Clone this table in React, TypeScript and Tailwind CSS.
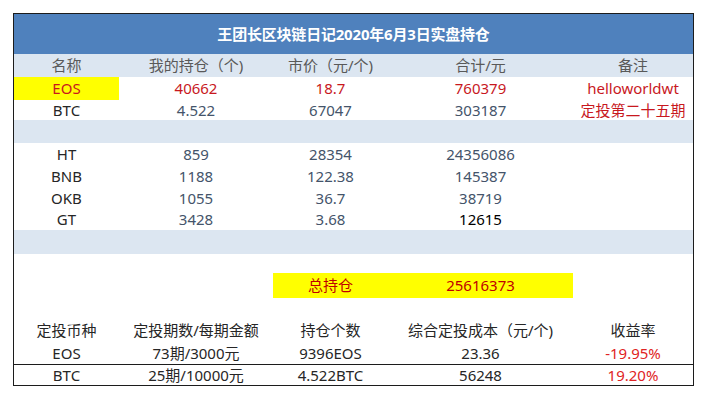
import React from 'react'

const cols = 'grid grid-cols-[105px_154px_115px_185px_120px]'

const navy = 'text-[#44546a]'
const red = 'text-[#c8181e]'
const dark = 'text-[#262626]'
const grey = 'text-[#595959]'

type Cell = { text: string; cls?: string }

function Row({ cells, h, bg = '' }: { cells: Cell[]; h: string; bg?: string }) {
  return (
    <div className={`${cols} ${h} ${bg}`}>
      {cells.map((c, i) => (
        <div key={i} className={`flex items-center justify-center ${c.cls ?? ''}`}>
          {c.text}
        </div>
      ))}
    </div>
  )
}

const holdings = [
  ['HT', '859', '28354', '24356086'],
  ['BNB', '1188', '122.38', '145387'],
  ['OKB', '1055', '36.7', '38719'],
  ['GT', '3428', '3.68', '12615'],
]

export default function App() {
  return (
    <div
      className="w-[712px] h-[400px] bg-white pt-[13px] pl-[13px] text-[15px] leading-none"
      style={{ fontFamily: '"Noto Sans", "Noto Sans CJK SC", sans-serif' }}
    >
      <div className="w-[681px] border border-[#1c1c1c]">
        {/* Title */}
        <div className="h-[40px] bg-[#4f81bd] flex items-center justify-center text-white font-bold text-[15px] tracking-[-0.2px]">
          王团长区块链日记2020年6月3日实盘持仓
        </div>

        {/* Column headers */}
        <Row
          h="h-[23px]"
          bg="bg-[#dce6f1]"
          cells={[
            { text: '名称', cls: grey },
            { text: '我的持仓（个)', cls: grey },
            { text: '市价（元/个)', cls: grey },
            { text: '合计/元', cls: grey },
            { text: '备注', cls: grey },
          ]}
        />

        {/* Main holdings */}
        <Row
          h="h-[23px]"
          cells={[
            { text: 'EOS', cls: `${red} bg-[#ffff00]` },
            { text: '40662', cls: red },
            { text: '18.7', cls: red },
            { text: '760379', cls: red },
            { text: 'helloworldwt', cls: red },
          ]}
        />
        <Row
          h="h-[20px]"
          cells={[
            { text: 'BTC', cls: dark },
            { text: '4.522', cls: navy },
            { text: '67047', cls: navy },
            { text: '303187', cls: navy },
            { text: '定投第二十五期', cls: red },
          ]}
        />
        <div className="h-[23px] bg-[#dce6f1]" />

        {/* Platform tokens */}
        {holdings.map((r, i) => (
          <Row
            key={r[0]}
            h={i === 3 ? 'h-[21px]' : 'h-[22px]'}
            cells={[
              { text: r[0], cls: dark },
              { text: r[1], cls: navy },
              { text: r[2], cls: navy },
              { text: r[3], cls: i === 3 ? 'text-black' : navy },
              { text: '' },
            ]}
          />
        ))}
        <div className="h-[24px] bg-[#dce6f1]" />

        {/* Total */}
        <div className="h-[19px]" />
        <div className={`${cols} h-[25px]`}>
          <div />
          <div />
          <div className="col-span-2 bg-[#ffff00] grid grid-cols-[115px_185px] text-[#c00000]">
            <div className="flex items-center justify-center">总持仓</div>
            <div className="flex items-center justify-center">25616373</div>
          </div>
          <div />
        </div>
        <div className="h-[20px]" />

        {/* DCA summary */}
        <Row
          h="h-[24px]"
          cells={[
            { text: '定投币种', cls: dark },
            { text: '定投期数/每期金额', cls: dark },
            { text: '持仓个数', cls: dark },
            { text: '综合定投成本（元/个)', cls: dark },
            { text: '收益率', cls: dark },
          ]}
        />
        <Row
          h="h-[23px]"
          bg="border-b border-[#1c1c1c]"
          cells={[
            { text: 'EOS', cls: dark },
            { text: '73期/3000元', cls: dark },
            { text: '9396EOS', cls: dark },
            { text: '23.36', cls: dark },
            { text: '-19.95%', cls: 'text-[#e02424]' },
          ]}
        />
        <Row
          h="h-[20px]"
          cells={[
            { text: 'BTC', cls: dark },
            { text: '25期/10000元', cls: dark },
            { text: '4.522BTC', cls: dark },
            { text: '56248', cls: dark },
            { text: '19.20%', cls: 'text-[#e02424]' },
          ]}
        />
      </div>
    </div>
  )
}
